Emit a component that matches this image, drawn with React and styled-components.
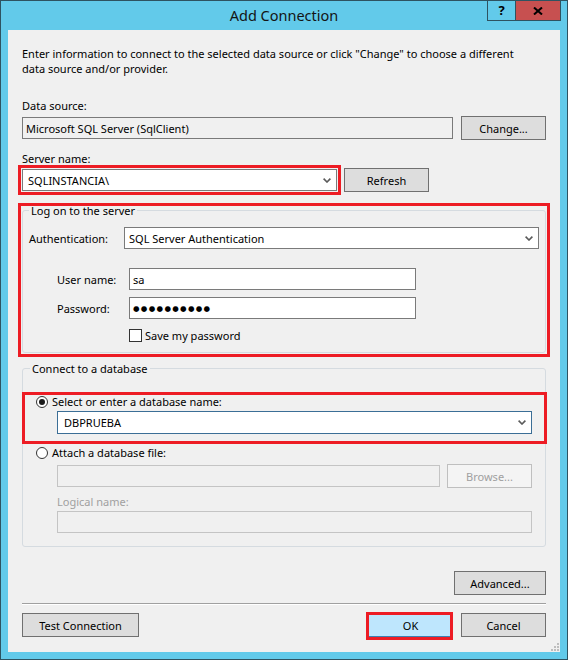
import React from "react";
import styled, { createGlobalStyle } from "styled-components";

const GlobalStyle = createGlobalStyle`
  html, body {
    margin: 0;
    padding: 0;
    background: #ffffff;
  }
`;

const Frame = styled.div`
  box-sizing: border-box;
  width: 568px;
  height: 660px;
  display: flex;
  flex-direction: column;
  background: #62caea;
  border: 1px solid #2e5361;
  font-family: "Noto Sans", "DejaVu Sans", sans-serif;
  font-size: 11px;
  color: #000;
`;

const TitleBar = styled.div`
  height: 29px;
  flex: none;
  display: grid;
  grid-template-columns: 1fr auto 1fr;
  align-items: start;
`;

const Title = styled.div`
  grid-column: 2;
  font-size: 14.5px;
  line-height: 29px;
  color: #141414;
`;

const Caption = styled.div`
  grid-column: 3;
  justify-self: end;
  display: flex;
  margin-right: 6px;
`;

const CaptionButton = styled.div`
  box-sizing: border-box;
  width: ${(p) => p.$w}px;
  height: 20px;
  display: flex;
  align-items: center;
  justify-content: center;
  background: ${(p) => p.$bg};
  border-left: 1px solid #2e5361;
  border-bottom: 1px solid #2e5361;
  border-right: ${(p) => (p.$last ? "1px solid #2e5361" : "none")};
  font-weight: 700;
  font-size: 13px;
  line-height: 1;
`;

const Client = styled.div`
  position: relative;
  flex: 1;
  margin: 0 7px 7px;
  padding: 16px 14px 0;
  background: #f0f0f0;
  display: flex;
  flex-direction: column;
`;

const Text = styled.div`
  line-height: 15px;
  margin-top: ${(p) => p.$mt || 0}px;
  padding-left: ${(p) => p.$indent || 0}px;
  color: ${(p) => (p.$disabled ? "#a0a0a0" : "#000")};
  white-space: nowrap;
`;

const Row = styled.div`
  display: flex;
  align-items: center;
  gap: ${(p) => (p.$gap ?? 7)}px;
  height: ${(p) => p.$h || 24}px;
  margin-top: ${(p) => p.$mt || 0}px;
  padding-left: ${(p) => p.$indent || 0}px;
`;

const FieldLabel = styled.span`
  flex: none;
  width: ${(p) => p.$w}px;
  white-space: nowrap;
`;

const Field = styled.div`
  box-sizing: border-box;
  display: flex;
  align-items: center;
  height: ${(p) => p.$h || 22}px;
  width: ${(p) => (p.$w ? `${p.$w}px` : "auto")};
  flex: ${(p) => (p.$w ? "none" : "1")};
  padding: 0 5px 0 ${(p) => p.$pl ?? 3}px;
  border: 1px solid ${(p) => p.$border || "#7a7a7a"};
  background: ${(p) => (p.$flat ? "#f0f0f0" : "#ffffff")};
  white-space: nowrap;
`;

const Arrow = styled.svg`
  margin-left: auto;
  flex: none;
`;

const Button = styled.div`
  box-sizing: border-box;
  flex: none;
  width: ${(p) => p.$w || 85}px;
  height: 24px;
  display: flex;
  align-items: center;
  justify-content: center;
  border: 1px solid ${(p) => (p.$primary ? "#3c7fb1" : p.$disabled ? "#bfbfbf" : "#707070")};
  background: ${(p) => (p.$primary ? "#bee6fd" : p.$disabled ? "#f4f4f4" : "#dddddd")};
  color: ${(p) => (p.$disabled ? "#a0a0a0" : "#000")};
  margin-left: ${(p) => (p.$push ? "auto" : "0")};
`;

const Group = styled.fieldset`
  margin: ${(p) => p.$mt}px 0 0;
  padding: ${(p) => p.$pt}px ${(p) => p.$px}px ${(p) => p.$pb}px;
  min-inline-size: 0;
  border: 1px solid #d5dbe0;
  border-radius: 3px;
`;

const Legend = styled.legend`
  padding: 0 2px;
  margin-left: ${(p) => p.$offset || 0}px;
  line-height: 15px;
`;

const Highlight = styled.div`
  position: relative;
  margin-top: ${(p) => p.$mt || 0}px;
  margin-left: ${(p) => (p.$push ? "auto" : "0")};
  &::after {
    content: "";
    position: absolute;
    inset: ${(p) => p.$inset};
    border: 3px solid #ed1c24;
    pointer-events: none;
  }
`;

const Check = styled.span`
  box-sizing: border-box;
  flex: none;
  width: 13px;
  height: 13px;
  border: 1px solid #333333;
  background: #ffffff;
`;

const Radio = styled.span`
  box-sizing: border-box;
  flex: none;
  width: 12px;
  height: 12px;
  border-radius: 50%;
  border: 1px solid #333333;
  background: #ffffff;
  display: flex;
  align-items: center;
  justify-content: center;
  &::after {
    content: "";
    display: ${(p) => (p.$checked ? "block" : "none")};
    width: 6px;
    height: 6px;
    border-radius: 50%;
    background: #1a1a1a;
  }
`;

const Dots = styled.span`
  font-family: "DejaVu Sans", sans-serif;
  font-size: 7.5px;
  letter-spacing: 1.3px;
`;

const Separator = styled.div`
  margin-top: 8px;
  border-top: 1px solid #a0a0a0;
  border-bottom: 1px solid #ffffff;
`;

const Footer = styled.div`
  display: flex;
  align-items: center;
  gap: 8px;
  margin-top: 8px;
  height: 24px;
`;

const Grip = styled.svg`
  position: absolute;
  right: 1px;
  bottom: 1px;
`;

const Chevron = () => (
  <Arrow width="8" height="5" viewBox="0 0 8 5">
    <path d="M0.6 0.6 L4 4 L7.4 0.6" fill="none" stroke="#5a5a5a" strokeWidth="1.6" />
  </Arrow>
);

const App = () => {
  return (
    <>
      <GlobalStyle />
      <Frame>
        <TitleBar>
          <Title>Add Connection</Title>
          <Caption>
            <CaptionButton $w={28} $bg="#62caea">?</CaptionButton>
            <CaptionButton $w={46} $bg="#c75050" $last>
              <svg width="10" height="8" viewBox="0 0 10 8">
                <path d="M1 0.5 L9 7.5 M9 0.5 L1 7.5" stroke="#000" strokeWidth="2" />
              </svg>
            </CaptionButton>
          </Caption>
        </TitleBar>

        <Client>
          <Text>
            Enter information to connect to the selected data source or click "Change" to choose a different
            <br />
            data source and/or provider.
          </Text>

          <Text $mt={22}>Data source:</Text>
          <Row $mt={3} $gap={8}>
            <Field $flat>Microsoft SQL Server (SqlClient)</Field>
            <Button>Change...</Button>
          </Row>

          <Text $mt={11}>Server name:</Text>
          <Row $mt={2}>
            <Highlight $inset="-4px">
              <Field $w={315} $pl={5}>
                SQLINSTANCIA\
                <Chevron />
              </Field>
            </Highlight>
            <Button>Refresh</Button>
          </Row>

          <Highlight $mt={11} $inset="0 -4px -4px -4px">
            <Group $mt={0} $pt={9} $px={6} $pb={10}>
              <Legend>Log on to the server</Legend>
              <Row $h={22} $gap={0}>
                <FieldLabel $w={95}>Authentication:</FieldLabel>
                <Field $pl={4}>
                  SQL Server Authentication
                  <Chevron />
                </Field>
              </Row>
              <Row $h={22} $gap={0} $mt={19} $indent={28}>
                <FieldLabel $w={72}>User name:</FieldLabel>
                <Field $w={287}>sa</Field>
              </Row>
              <Row $h={22} $gap={0} $mt={7} $indent={28}>
                <FieldLabel $w={72}>Password:</FieldLabel>
                <Field $w={287}>
                  <Dots>●●●●●●●●●●</Dots>
                </Field>
              </Row>
              <Row $h={13} $gap={3} $mt={10} $indent={100}>
                <Check />
                <span>Save my password</span>
              </Row>
            </Group>
          </Highlight>

          <Group $mt={8} $pt={18} $px={13} $pb={13}>
            <Legend $offset={-6}>Connect to a database</Legend>
            <Highlight $inset="-2px -15px -10px -14px">
              <Row $h={15} $gap={4}>
                <Radio $checked />
                <span>Select or enter a database name:</span>
              </Row>
              <Row $h={23} $mt={2} $indent={21}>
                <Field $h={23} $pl={6} $border="#3b6e96">
                  DBPRUEBA
                  <Chevron />
                </Field>
              </Row>
            </Highlight>
            <Row $h={15} $gap={4} $mt={11}>
              <Radio />
              <span>Attach a database file:</span>
            </Row>
            <Row $mt={4} $indent={21}>
              <Field $flat $border="#c4c4c4" />
              <Button $disabled>Browse...</Button>
            </Row>
            <Text $mt={6} $indent={21} $disabled>
              Logical name:
            </Text>
            <Row $h={22} $mt={2} $indent={21}>
              <Field $flat $border="#c4c4c4" />
            </Row>
          </Group>

          <Row $mt={24}>
            <Button $w={92} $push>
              Advanced...
            </Button>
          </Row>

          <Separator />

          <Footer>
            <Button $w={117}>Test Connection</Button>
            <Highlight $inset="-1px 0 -3px -2px" $push>
              <Button $primary>OK</Button>
            </Highlight>
            <Button>Cancel</Button>
          </Footer>

          <Grip width="8" height="8" viewBox="0 0 8 8">
            <rect x="6" y="0" width="2" height="2" fill="#bdbdbd" />
            <rect x="3" y="3" width="2" height="2" fill="#bdbdbd" />
            <rect x="6" y="3" width="2" height="2" fill="#bdbdbd" />
            <rect x="0" y="6" width="2" height="2" fill="#bdbdbd" />
            <rect x="3" y="6" width="2" height="2" fill="#bdbdbd" />
            <rect x="6" y="6" width="2" height="2" fill="#bdbdbd" />
          </Grip>
        </Client>
      </Frame>
    </>
  );
};

export default App;
